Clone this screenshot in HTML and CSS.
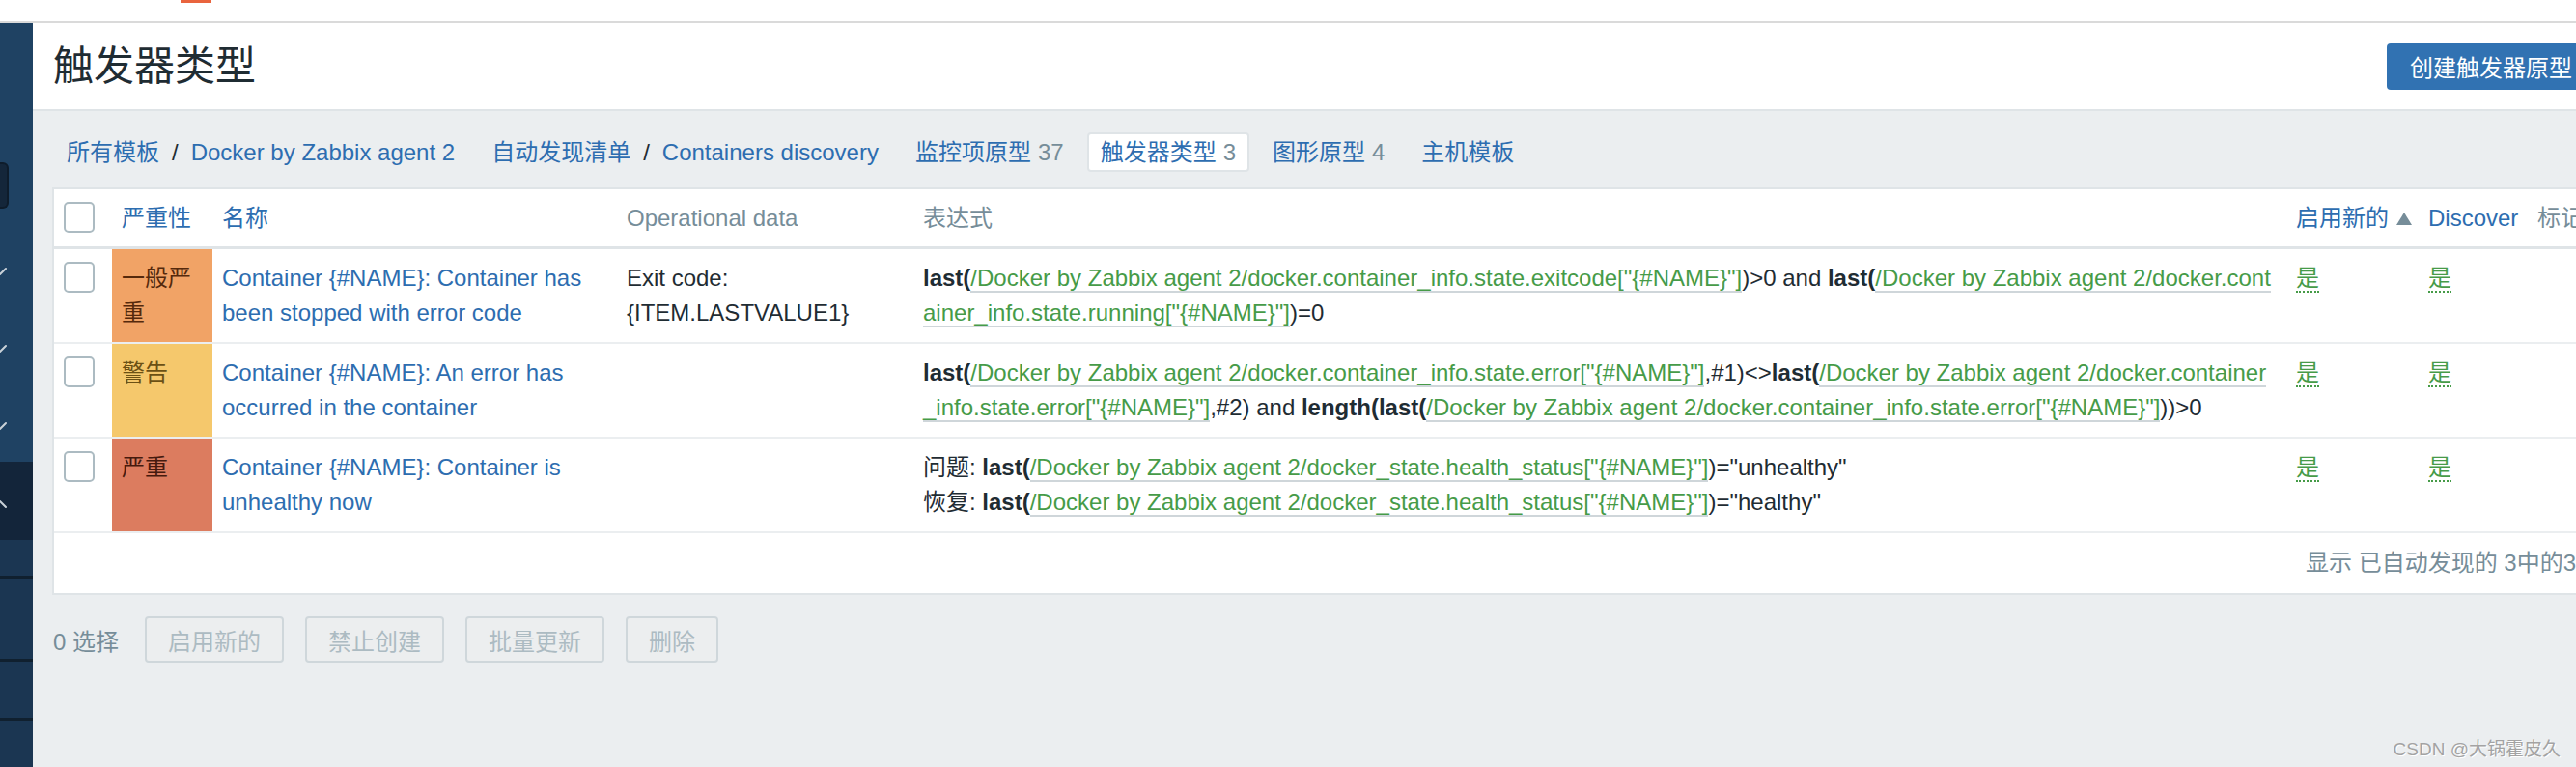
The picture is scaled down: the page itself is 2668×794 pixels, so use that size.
FILE: index.html
```html
<!DOCTYPE html>
<html lang="zh-CN">
<head>
<meta charset="utf-8">
<title>触发器类型</title>
<link rel="stylesheet" href="styles.css">
</head>
<body>
<div class="topbar"><span class="topbar-mark"></span></div>
<div class="layout">
  <aside class="sidebar">
    <div class="sb-top"></div>
    <div class="sb-search"></div>
    <div class="sb-gap"></div>
    <div class="sb-item"><svg class="chev" width="8" height="12" viewBox="0 0 8 12"><line x1="0" y1="9" x2="6" y2="3"/></svg></div>
    <div class="sb-item"><svg class="chev" width="8" height="12" viewBox="0 0 8 12"><line x1="0" y1="9" x2="6" y2="3"/></svg></div>
    <div class="sb-item"><svg class="chev" width="8" height="12" viewBox="0 0 8 12"><line x1="0" y1="9" x2="6" y2="3"/></svg></div>
    <div class="sb-item sb-open"><svg class="chev" width="8" height="12" viewBox="0 0 8 12"><line x1="0" y1="3" x2="6" y2="9"/></svg></div>
    <div class="sb-sub sb-sub1"></div>
    <div class="sb-sub sb-sub2"></div>
    <div class="sb-sub sb-sub3"></div>
    <div class="sb-sub sb-sub4"></div>
  </aside>
  <main class="main">
    <header class="page-header">
      <h1 class="page-title">触发器类型</h1>
      <button class="btn-primary">创建触发器原型</button>
    </header>
    <nav class="tabs">
      <div class="tab"><a class="link">所有模板</a><span class="sep">/</span><a class="link">Docker by Zabbix agent 2</a></div>
      <div class="tab"><a class="link">自动发现清单</a><span class="sep">/</span><a class="link">Containers discovery</a></div>
      <div class="tab"><a class="link">监控项原型</a><span class="count">37</span></div>
      <div class="tab tab-active"><a class="link">触发器类型</a><span class="count">3</span></div>
      <div class="tab"><a class="link">图形原型</a><span class="count">4</span></div>
      <div class="tab"><a class="link">主机模板</a></div>
    </nav>
    <section class="list">
      <table class="grid">
        <colgroup>
          <col class="c-cb"><col class="c-sev"><col class="c-name"><col class="c-op"><col class="c-expr"><col class="c-status"><col class="c-disc"><col class="c-tags">
        </colgroup>
        <thead>
          <tr>
            <th><span class="cb"></span></th>
            <th class="sortable">严重性</th>
            <th class="sortable">名称</th>
            <th>Operational data</th>
            <th>表达式</th>
            <th class="sortable">启用新的<span class="arrow-up"></span></th>
            <th class="sortable">Discover</th>
            <th>标记</th>
          </tr>
        </thead>
        <tbody>
          <tr>
            <td><span class="cb"></span></td>
            <td class="sev sev-average">一般严重</td>
            <td><a class="link">Container {#NAME}: Container has been stopped with error code</a></td>
            <td>Exit code: {ITEM.LASTVALUE1}</td>
            <td class="expr"><b>last(</b><a class="item">/Docker by Zabbix agent 2/docker.container_info.state.exitcode["{#NAME}"]</a>)&gt;0 and <b>last(</b><a class="item">/Docker by Zabbix agent 2/docker.container_info.state.running["{#NAME}"]</a>)=0</td>
            <td><a class="yes">是</a></td>
            <td><a class="yes">是</a></td>
            <td></td>
          </tr>
          <tr>
            <td><span class="cb"></span></td>
            <td class="sev sev-warning">警告</td>
            <td><a class="link">Container {#NAME}: An error has occurred in the container</a></td>
            <td></td>
            <td class="expr"><b>last(</b><a class="item">/Docker by Zabbix agent 2/docker.container_info.state.error["{#NAME}"]</a>,#1)&lt;&gt;<b>last(</b><a class="item">/Docker by Zabbix agent 2/docker.container_info.state.error["{#NAME}"]</a>,#2) and <b>length(last(</b><a class="item">/Docker by Zabbix agent 2/docker.container_info.state.error["{#NAME}"]</a>))&gt;0</td>
            <td><a class="yes">是</a></td>
            <td><a class="yes">是</a></td>
            <td></td>
          </tr>
          <tr>
            <td><span class="cb"></span></td>
            <td class="sev sev-high">严重</td>
            <td><a class="link">Container {#NAME}: Container is unhealthy now</a></td>
            <td></td>
            <td class="expr">问题: <b>last(</b><a class="item">/Docker by Zabbix agent 2/docker_state.health_status["{#NAME}"]</a>)="unhealthy"<br>恢复: <b>last(</b><a class="item">/Docker by Zabbix agent 2/docker_state.health_status["{#NAME}"]</a>)="healthy"</td>
            <td><a class="yes">是</a></td>
            <td><a class="yes">是</a></td>
            <td></td>
          </tr>
        </tbody>
      </table>
      <div class="paging">显示 已自动发现的 3中的3</div>
    </section>
    <div class="actions">
      <span class="selected">0 选择</span>
      <button class="btn-alt" disabled>启用新的</button>
      <button class="btn-alt" disabled>禁止创建</button>
      <button class="btn-alt" disabled>批量更新</button>
      <button class="btn-alt" disabled>删除</button>
    </div>
  </main>
</div>
<div class="watermark">CSDN @大锅霍皮久</div>
</body>
</html>
```

FILE: styles.css
```css
* { box-sizing: border-box; }
html, body { margin: 0; padding: 0; }
body {
  width: 2668px;
  height: 794px;
  overflow: hidden;
  position: relative;
  background: #ebeef0;
  font-family: "Liberation Sans", "Noto Sans CJK SC", sans-serif;
  font-size: 24px;
  color: #1f2c33;
}

/* top strip */
.topbar {
  height: 24px;
  background: #fff;
  border-bottom: 2px solid #dadada;
  display: flex;
  align-items: flex-start;
}
.topbar-mark {
  margin-left: 187px;
  width: 32px;
  height: 3px;
  background: #e9643e;
}

.layout { display: flex; height: 770px; }

/* sidebar */
.sidebar {
  width: 34px;
  flex: none;
  background: #1f4263;
  display: flex;
  flex-direction: column;
  overflow: hidden;
}
.sb-top { height: 144px; flex: none; }
.sb-search {
  height: 48px;
  width: 9px;
  flex: none;
  background: #14263a;
  border: 2px solid #0e1c2b;
  border-left: none;
  border-radius: 0 6px 6px 0;
}
.sb-gap { height: 22px; flex: none; }
.sb-item {
  height: 80px;
  flex: none;
  display: flex;
  align-items: center;
  padding-top: 6px;
}
.sb-open { background: #13253a; height: 81px; }
.chev line { stroke: #c9d1d8; stroke-width: 2; stroke-linecap: round; }
.sb-sub { flex: none; background: #1b3652; border-top: 3px solid #10202f; }
.sb-sub1 { height: 37px; border-top: none; }
.sb-sub2 { height: 86px; }
.sb-sub3 { height: 61px; }
.sb-sub4 { flex: 1; }

/* main */
.main {
  width: 2666px;
  flex: none;
  display: flex;
  flex-direction: column;
}
.page-header {
  height: 91px;
  flex: none;
  background: #fff;
  border-bottom: 2px solid #dfe4e7;
  display: flex;
  align-items: center;
  justify-content: space-between;
  padding: 0 12px 0 21px;
}
.page-title {
  margin: 0;
  font-size: 42px;
  font-weight: normal;
  line-height: 48px;
  color: #1f2c33;
}
.btn-primary {
  height: 48px;
  padding: 0 24px;
  border: none;
  border-radius: 4px;
  background: #3172b2;
  color: #fff;
  font-family: inherit;
  font-size: 24px;
}

/* nav tabs */
.tabs {
  height: 79px;
  flex: none;
  display: flex;
  align-items: flex-start;
  gap: 10px;
  padding: 22px 20px 0 21px;
}
.tab {
  height: 41px;
  line-height: 37px;
  padding: 0 12px;
  border: 2px solid transparent;
  border-radius: 4px;
  white-space: nowrap;
}
.tab-active { background: #fff; border-color: #dfe4e7; }
.link { color: #2d6db0; text-decoration: none; }
.sep { margin: 0 13px 0 13px; color: #1f2c33; }
.count { margin-left: 7px; color: #768d99; }

/* list */
.list {
  margin: 0 20px;
  background: #fff;
  border: 2px solid #dfe4e7;
}
.grid {
  width: 2622px;
  table-layout: fixed;
  border-collapse: separate;
  border-spacing: 0;
}
.c-cb { width: 60px; }
.c-sev { width: 104px; }
.c-name { width: 419px; }
.c-op { width: 307px; }
.c-expr { width: 1422px; }
.c-status { width: 137px; }
.c-disc { width: 113px; }
.c-tags { width: 60px; }

.grid th {
  padding: 12px 10px 11px;
  line-height: 36px;
  font-weight: normal;
  text-align: left;
  color: #768d99;
  white-space: nowrap;
  border-bottom: 3px solid #dfe4e7;
  vertical-align: top;
}
.grid th.sortable { color: #2d6db0; }
.grid td {
  padding: 12px 10px;
  line-height: 36px;
  vertical-align: top;
  border-bottom: 2px solid #ebeef0;
}
.cb {
  display: inline-block;
  width: 32px;
  height: 32px;
  margin-top: 1px;
  vertical-align: top;
  border: 2px solid #acbbc2;
  border-radius: 5px;
  background: #fff;
}
.sev-average { background: #f1a366; color: #55290c; }
.sev-warning { background: #f5c86c; color: #6b5014; }
.sev-high { background: #dc7c5f; color: #461a0e; }

.expr { word-break: break-all; }
.expr b { font-weight: bold; }
.item {
  color: #469b48;
  border-bottom: 2px solid #cfd6da;
  text-decoration: none;
}
.yes {
  color: #469b48;
  text-decoration: none;
  border-bottom: 2px dotted #469b48;
}
.arrow-up {
  display: inline-block;
  margin-left: 8px;
  width: 0;
  height: 0;
  border-left: 8px solid transparent;
  border-right: 8px solid transparent;
  border-bottom: 13px solid #768d99;
  vertical-align: 1px;
}
.paging {
  padding: 13px 10px;
  line-height: 36px;
  text-align: right;
  color: #768d99;
  white-space: nowrap;
}

/* actions */
.actions {
  margin-top: 22px;
  padding-left: 21px;
  display: flex;
  align-items: center;
  gap: 22px;
}
.selected { color: #768d99; margin-right: 5px; white-space: nowrap; }
.btn-alt {
  height: 48px;
  padding: 0 22px;
  border: 2px solid #cfd7db;
  border-radius: 4px;
  background: #eceeef;
  color: #acbbc2;
  font-family: inherit;
  font-size: 24px;
}

.watermark {
  position: absolute;
  right: 16px;
  bottom: 7px;
  font-size: 19px;
  color: #a3a3a3;
  text-shadow: 1px 1px 0 #fff;
  white-space: nowrap;
}
```
